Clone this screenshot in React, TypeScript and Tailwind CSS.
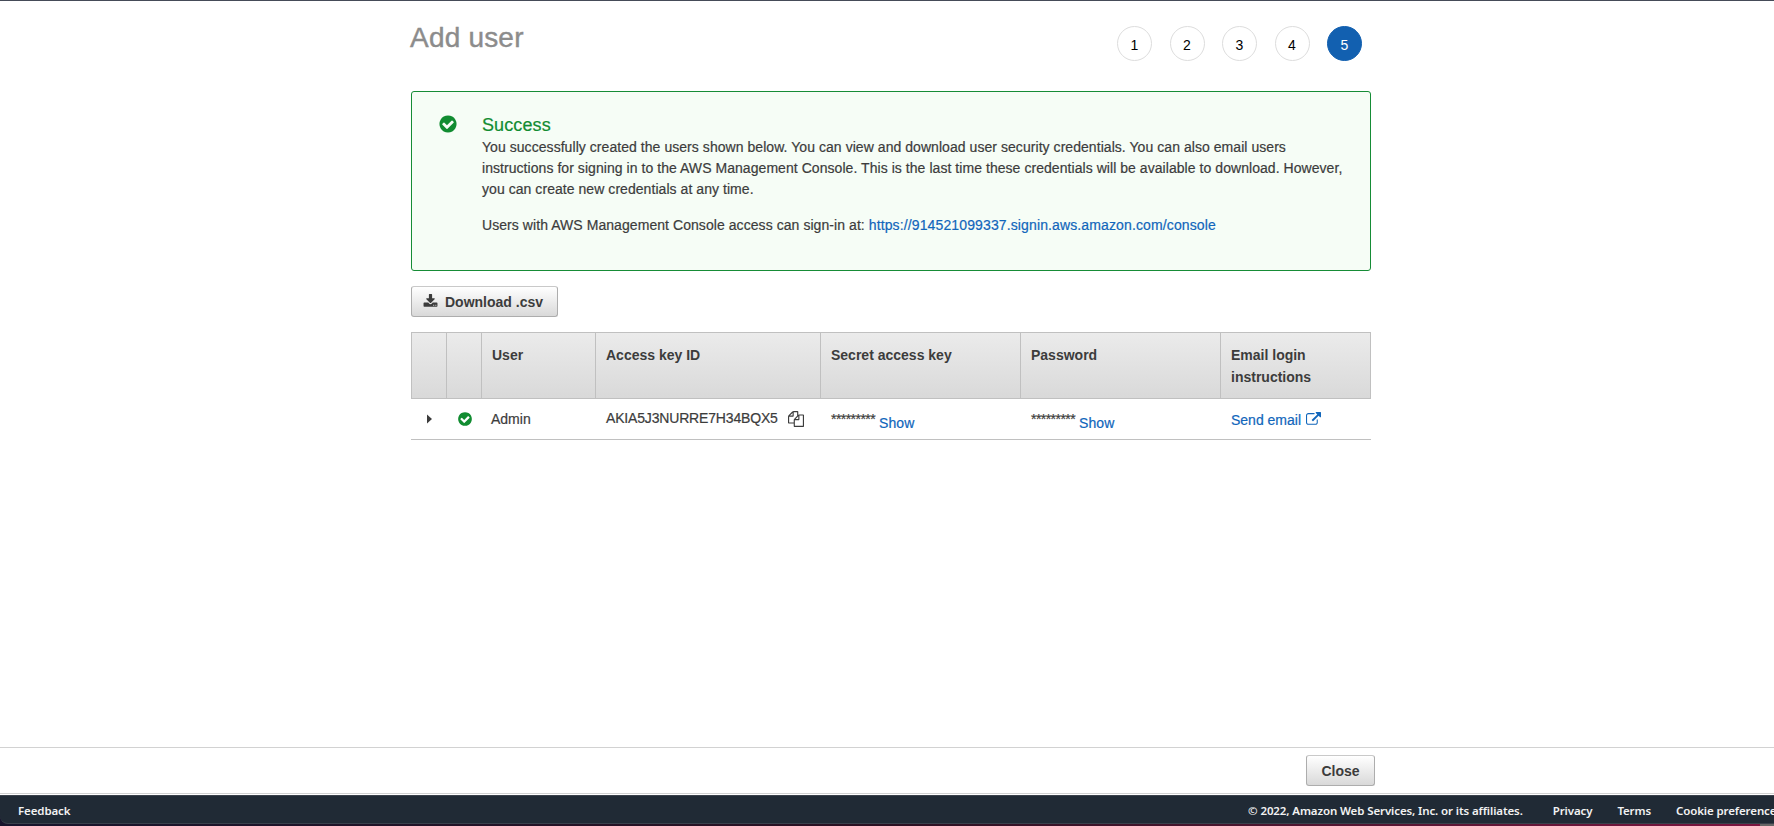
import type { ReactNode } from "react";

const CHECK =
  "M1412 734q0-28-18-46l-91-90q-19-19-45-19t-45 19l-408 407-226-226q-19-19-45-19t-45 19l-91 90q-18 18-18 46 0 27 18 45l362 362q19 19 45 19 27 0 46-19l543-543q18-18 18-45zm252 162q0 209-103 385.500t-279.500 279.500-385.500 103-385.500-103-279.500-279.500-103-385.500 103-385.500 279.500-279.500 385.500-103 385.500 103 279.500 279.500 103 385.500z";
const COPY =
  "M1696 384q40 0 68 28t28 68v1216q0 40-28 68t-68 28h-960q-40 0-68-28t-28-68v-288h-544q-40 0-68-28t-28-68v-672q0-40 20-88t48-76l408-408q28-28 76-48t88-20h416q40 0 68 28t28 68v328q68-40 128-40h416zm-544 213l-299 299h299v-299zm-640-384l-299 299h299v-299zm196 647l316-316v-416h-384v416q0 40-28 68t-68 28h-416v640h512v-256q0-40 20-88t48-76zm956 804v-1152h-384v416q0 40-28 68t-68 28h-416v640h896z";
const EXTERNAL =
  "M1408 928v320q0 119-84.500 203.500t-203.500 84.500h-832q-119 0-203.500-84.500t-84.500-203.500v-832q0-119 84.500-203.500t203.500-84.500h704q14 0 23 9t9 23v64q0 14-9 23t-23 9h-704q-66 0-113 47t-47 113v832q0 66 47 113t113 47h832q66 0 113-47t47-113v-320q0-14 9-23t23-9h64q14 0 23 9t9 23zm384-864v512q0 26-19 45t-45 19-45-19l-176-176-652 652q-10 10-23 10t-23-10l-114-114q-10-10-10-23t10-23l652-652-176-176q-19-19-19-45t19-45 45-19h512q26 0 45 19t19 45z";
const DOWNLOAD =
  "M1344 1344q0-26-19-45t-45-19-45 19-19 45 19 45 45 19 45-19 19-45zm256 0q0-26-19-45t-45-19-45 19-19 45 19 45 45 19 45-19 19-45zm128-224v320q0 40-28 68t-68 28h-1472q-40 0-68-28t-28-68v-320q0-40 28-68t68-28h465l135 136q58 56 136 56t136-56l136-136h464q40 0 68 28t28 68zm-325-569q17 41-14 70l-448 448q-18 19-45 19t-45-19l-448-448q-31-29-14-70 17-39 59-39h256v-448q0-26 19-45t45-19h256q26 0 45 19t19 45v448h256q42 0 59 39z";

function Icon({ d, className }: { d: string; className: string }) {
  return (
    <svg viewBox="0 0 1792 1792" fill="currentColor" className={className} aria-hidden="true">
      <path d={d} />
    </svg>
  );
}

function Button({ className, children }: { className: string; children: ReactNode }) {
  return (
    <button
      className={
        "flex h-[31px] items-center rounded-[3px] border border-[#adadad] border-t-[#c9c9c9] bg-linear-to-b from-white to-[#d9d9d9] text-sm font-bold text-[#3c3c3c] " +
        className
      }
    >
      {children}
    </button>
  );
}

const steps = [1, 2, 3, 4, 5];
const headers = ["", "", "User", "Access key ID", "Secret access key", "Password", "Email login instructions"];
const columns = "grid grid-cols-[35px_35px_114px_225px_200px_200px_150px]";

function Masked() {
  return (
    <div className="flex pl-[11px]">
      <span className="pt-[9px] tracking-[-0.55px]">*********</span>
      <a className="pt-[13px] pl-1 tracking-[0.06px] text-[#1166bb]">Show</a>
    </div>
  );
}

export default function App() {
  return (
    <div className="flex h-[826px] w-full flex-col overflow-hidden border-t border-[#454b58] bg-white font-['Liberation_Sans',Arial,sans-serif] text-sm text-[#3c3c3c]">
      <main className="ml-[411px] w-[960px] flex-1">
        <header className="flex h-[90px] justify-between">
          <h1 className="-ml-px pt-[19px] text-[28px] leading-9 tracking-[0.2px] text-[#8c8c8c] [-webkit-text-stroke:0.4px_#8c8c8c]">
            Add user
          </h1>
          <ol className="flex gap-[17.5px] pt-[25px] pr-[9px]">
            {steps.map((n) => (
              <li
                key={n}
                className={
                  "flex size-[35px] items-center justify-center rounded-full border pt-[3px] text-sm " +
                  (n === 5 ? "border-[#1260b0] bg-[#1260b0] text-white" : "border-[#ddd] text-black")
                }
              >
                {n}
              </li>
            ))}
          </ol>
        </header>

        <section className="flex h-[180px] rounded-[3px] border border-[#168c36] bg-[#f6fdf6] pt-[22px] pl-[27px]">
          <Icon d={CHECK} className="-ml-px size-5 shrink-0 text-[#118c31]" />
          <div className="pl-6 [-webkit-text-stroke:0.2px_currentColor]">
            <h2 className="text-lg leading-[23px] tracking-[0.1px] text-[#118c31]">Success</h2>
            <p className="w-[880px] leading-[21px] tracking-[0.054px]">
              You successfully created the users shown below. You can view and download user security credentials. You can also email users
              <br />
              instructions for signing in to the AWS Management Console. This is the last time these credentials will be available to download. However,
              <br />
              you can create new credentials at any time.
            </p>
            <p className="pt-[15px] leading-[21px] tracking-[0.064px]">
              Users with AWS Management Console access can sign-in at:{" "}
              <a className="tracking-[0.125px] text-[#1166bb]">https://914521099337.signin.aws.amazon.com/console</a>
            </p>
          </div>
        </section>

        <Button className="mt-[15px] w-[147px] pl-[11px]">
          <Icon d={DOWNLOAD} className="mr-[7px] size-[15px]" />
          Download .csv
        </Button>

        <div className="mt-[15px]">
          <div className={columns + " h-[67px] border border-r-0 border-[#c0c0c0] bg-linear-to-b from-[#ebebeb] to-[#d9d9d9]"}>
            {headers.map((h, i) => (
              <div key={i} className="border-r border-[#c0c0c0] pt-[11px] pl-[10px] leading-[22px] font-bold text-[#3c3c3c]">
                {h}
              </div>
            ))}
          </div>
          <div className={columns + " h-[41px] border-b border-[#c0c0c0] leading-[22px] [-webkit-text-stroke:0.2px_currentColor]"}>
            <div className="pt-[15px] pl-4">
              <svg viewBox="0 0 5 10" className="h-[10px] w-[5px]" fill="#3c3c3c">
                <path d="M0 0.500L5 5L0 9.500Z" />
              </svg>
            </div>
            <div className="pt-[12px] pl-[11px]">
              <Icon d={CHECK} className="size-4 text-[#118c31]" />
            </div>
            <div className="pt-[9px] pl-[10px]">Admin</div>
            <div className="flex pt-[8px] pl-[11px]">
              <span className="tracking-[-0.17px]">AKIA5J3NURRE7H34BQX5</span>
              <Icon d={COPY} className="mt-1 ml-[10px] size-4 [-webkit-text-stroke:0]" />
            </div>
            <Masked />
            <Masked />
            <div className="flex pt-[10px] pl-[11px] text-[#1166bb]">
              Send email
              <Icon d={EXTERNAL} className="mt-[3px] ml-[5px] size-[15px]" />
            </div>
          </div>
        </div>
      </main>

      <div className="mb-px flex h-[47px] justify-end border-y border-[#d2d2d2] pt-[7px] pr-[399px]">
        <Button className="w-[69px] justify-center">Close</Button>
      </div>
      <footer className="bg-linear-to-r from-[#17142c] via-[#2b1022] to-[#7c1440]">
        <div className="flex h-[29px] items-center rounded-bl-lg border-t border-b border-t-[#3b424c] border-b-[#39414b] bg-[#202a35] pt-[3px] pl-[18px] font-['Noto_Sans','Open_Sans',sans-serif] text-[11.5px] font-semibold tracking-[-0.11px] whitespace-nowrap text-[#f2f2f2]">
          <span>Feedback</span>
          <span className="ml-auto">© 2022, Amazon Web Services, Inc. or its affiliates.</span>
          <span className="ml-[30px]">Privacy</span>
          <span className="ml-[25px]">Terms</span>
          <span className="ml-[25px] w-[98px]">Cookie preferences</span>
        </div>
        <div className="ml-auto h-[2px] w-[14px] bg-[#666]" />
      </footer>
    </div>
  );
}
